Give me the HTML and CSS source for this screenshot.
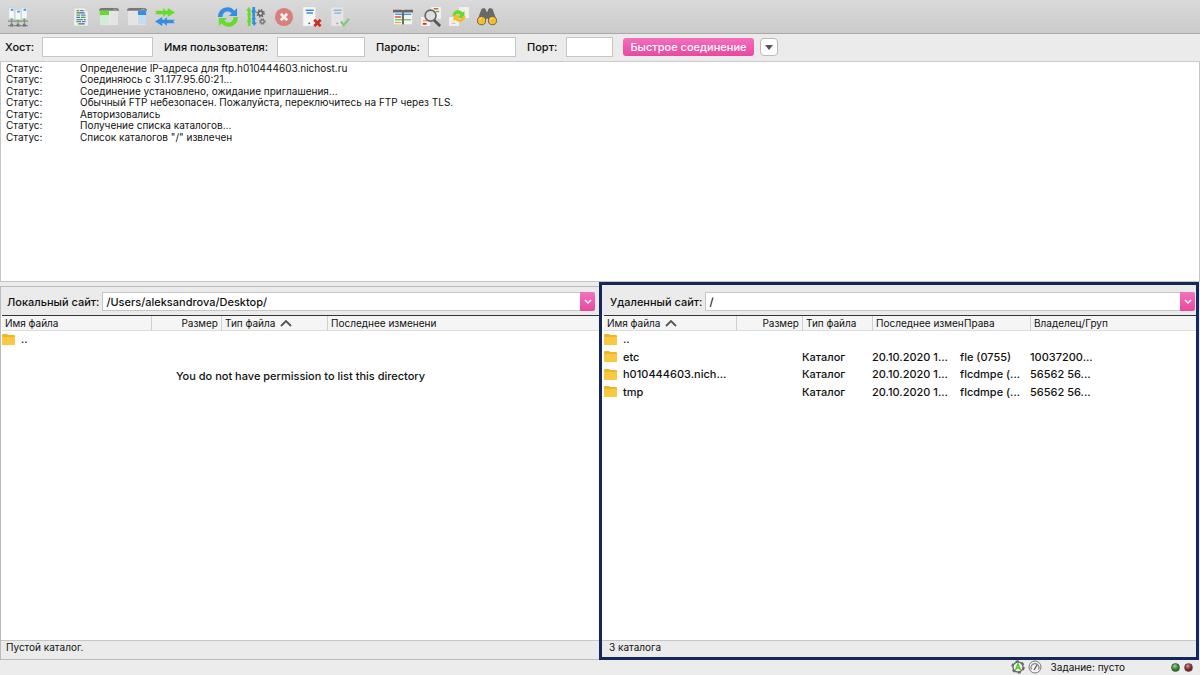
FILE: index.html
```html
<!DOCTYPE html>
<html lang="ru">
<head>
<meta charset="utf-8">
<title>FTP</title>
<link rel="stylesheet" href="styles.css">
</head>
<body>
<div class="app">
  <header class="toolbar">
    <div class="tools">
      <button class="tool" type="button" aria-label="Менеджер сайтов"><svg viewBox="0 0 22 22"><g fill="#f4f8fb" stroke="#c5cdd3" stroke-width=".5"><path d="M1 1h6v12H1zM15 1h6v12h-6zM8 3h6v11H8z"/></g><g fill="#3a9de8"><path d="M3 2h3v2H3zM10 4h3v2h-3zM17 2h3v2h-3z"/></g><path d="M0 15.500h22M0 20.500h22M4 13v6M11 14v6M18 13v6" stroke="#888" stroke-width="1.200" fill="none"/><g fill="#5ebd55"><circle cx="4" cy="14" r="1.300"/><circle cx="11" cy="15.500" r="1.500"/><circle cx="18" cy="14" r="1.300"/></g><g fill="#777"><path d="M2.500 18.500h3v3h-3zM9.500 18.500h3v3h-3zM16.500 18.500h3v3h-3z"/></g></svg></button>
    </div>
    <div class="tools">
      <button class="tool" type="button" aria-label="Журнал"><svg viewBox="0 0 22 22"><path d="M3 1h12l4 4v16H3z" fill="#eee" stroke="#c7c7c7" stroke-width=".6"/><path d="M15 1v4h4" fill="#ddd"/><g stroke-width="1.400" fill="none"><path d="M6 4h3M6 9h4M11 11.500h5M6 16h5" stroke="#49a942"/><path d="M10 4h4M11 9h5M6 14h7M12 16h4" stroke="#3d8ed9"/><path d="M6 6.500h9M6 11.500h4M14 14h2M8 18.500h7" stroke="#667"/></g></svg></button>
      <button class="tool" type="button" aria-label="Локальное дерево"><svg viewBox="0 0 22 22"><path d="M1 4q0-3 3-3h14q3 0 3 3v16H1z" fill="#eaeaea" stroke="#c9c9c9" stroke-width=".5"/><path d="M0 4q0-3 3-3h16q3 0 3 3z" fill="#777"/><path d="M1 4h10v5H1z" fill="#67da2d"/><path d="M1 10h10v9H1z" fill="#d0ecd2"/><path d="M12 5h9v14h-9z" fill="#e4e4e4"/><path d="M16 2.500h1M18 2.500h1" stroke="#ddd"/></svg></button>
      <button class="tool" type="button" aria-label="Удаленное дерево"><svg viewBox="0 0 22 22"><path d="M1 4q0-3 3-3h14q3 0 3 3v16H1z" fill="#eaeaea" stroke="#c9c9c9" stroke-width=".5"/><path d="M0 4q0-3 3-3h16q3 0 3 3z" fill="#777"/><path d="M12 4h9v5h-9z" fill="#348ee4"/><path d="M12 10h9v9h-9z" fill="#c6dcec"/><path d="M1 5h10v14H1z" fill="#e4e4e4"/><path d="M16 2.500h1M18 2.500h1" stroke="#ddd"/></svg></button>
      <button class="tool" type="button" aria-label="Очередь"><svg viewBox="0 0 22 22"><path d="M0 4h9V1l3 3 2 0V1l8 5-8 5V8h-2l-3 3V8H0l2-2z" fill="#65dc2c"/><path d="M22 14h-9v-3l-3 3H8v-3l-8 5 8 5v-3h2l3 3v-3h9l-2-2z" fill="#348ee4"/></svg></button>
    </div>
    <div class="tools">
      <button class="tool" type="button" aria-label="Обновить"><svg viewBox="0 0 22 22"><path d="M0 11C0 0 13-3 18 4l3-3v9h-9l3-3C11 3 5 5 5 11z" fill="#348ee4"/><path d="M22 11c0 11-13 14-18 7l-3 3v-9h9l-3 3c4 4 10 2 10-4z" fill="#65dc2c"/></svg></button>
      <button class="tool" type="button" aria-label="Обработка очереди"><svg viewBox="0 0 22 22"><path d="M3 0l3 4H5v3l1 2H5v5l1 1-1 2v4H2v-4l-1-2 1-1V9H1l1-2V4H0z" fill="#65dc2c"/><path d="M9 21l-3-4h1v-3l-1-2h1V7L6 5l1-2V0h3v3l1 2-1 2v5h1l-1 2v3h2z" fill="#348ee4"/><circle cx="16" cy="7" r="2.500" fill="none" stroke="#666" stroke-width="1.800"/><circle cx="16" cy="7" r="4" fill="none" stroke="#666" stroke-width="1.500" stroke-dasharray="1.570 1.570"/><circle cx="18" cy="16" r="2" fill="none" stroke="#777" stroke-width="1.500"/><circle cx="18" cy="16" r="3" fill="none" stroke="#777" stroke-width="1.200" stroke-dasharray="1.200 1.200"/></svg></button>
      <button class="tool" type="button" aria-label="Отмена"><svg viewBox="0 0 22 22"><circle cx="11" cy="11" r="10" fill="#d87f7c"/><path d="M7.500 7.500l7 7M14.500 7.500l-7 7" stroke="#eee" stroke-width="3"/></svg></button>
      <button class="tool" type="button" aria-label="Отключиться"><svg viewBox="0 0 22 22"><path d="M1 0h14v21H1z" fill="#f6f6f6" stroke="#d5d5d5" stroke-width=".5"/><path d="M4 3.500h9M5 6.500h7" stroke="#348ee4" stroke-width="1.700"/><circle cx="8" cy="18" r="1" fill="#555"/><path d="M13.500 14l7 7M20.500 14l-7 7" stroke="#d22921" stroke-width="3"/></svg></button>
      <button class="tool" type="button" aria-label="Переподключиться"><svg viewBox="0 0 22 22"><path d="M1 0h14v21H1z" fill="#e4e4e4" stroke="#cfcfcf" stroke-width=".5"/><path d="M4 3.500h9M5 6.500h7" stroke="#8bb5dc" stroke-width="1.700"/><circle cx="8" cy="18" r="1" fill="#999"/><path d="M12 16l3 4 6-7" fill="none" stroke="#86c77f" stroke-width="2.500"/></svg></button>
    </div>
    <div class="tools">
      <button class="tool" type="button" aria-label="Фильтр"><svg viewBox="0 0 22 22"><path d="M1 5h20v14H1z" fill="#f5f5f5"/><path d="M0 3h10l1 1 1-1h10v3H0z" fill="#666"/><path d="M11 4v15" stroke="#666" stroke-width="1.800"/><path d="M2 8h18" stroke="#348ee4" stroke-width="1.400"/><path d="M2 11h7" stroke="#e14b3c" stroke-width="1.600"/><path d="M2 14h18" stroke="#66ca3d" stroke-width="1.400"/><path d="M2 17h7" stroke="#e9b32d" stroke-width="1.400"/><path d="M11 7v12" stroke="#666" stroke-width="1.800"/></svg></button>
      <button class="tool" type="button" aria-label="Сравнение"><svg viewBox="0 0 22 22"><path d="M11 0h11v13H11zM0 11h10v10H0z" fill="#f1f1f1"/><path d="M14 2h5" stroke="#e04b3c" stroke-width="1.500"/><path d="M16 5h4" stroke="#67b944" stroke-width="1.500"/><path d="M2 15h6" stroke="#e5ac31" stroke-width="1.500"/><path d="M2 18.500h4" stroke="#e02525" stroke-width="2"/><path d="M14 14l7 7" stroke="#555" stroke-width="3"/><circle cx="10.500" cy="9.500" r="6" fill="#dedede" stroke="#656565" stroke-width="1.800"/></svg></button>
      <button class="tool" type="button" aria-label="Синхронный просмотр"><svg viewBox="0 0 22 22"><path d="M11 0h11v12H11zM0 11h11v10H0z" fill="#f0f0f0"/><path d="M4 10c0-7 8-8 11-4l2-2v8h-7l2-3c-2-3-5-1-5 1z" fill="#65d92c"/><path d="M18 10c0 7-8 8-11 4l-2 2V9h7l-2 3c2 3 5 1 5-2z" fill="#f5bc27"/><path d="M3 18h4" stroke="#bbb"/></svg></button>
      <button class="tool" type="button" aria-label="Поиск"><svg viewBox="0 0 22 22"><path d="M5 2l3-1 2 2v2h2V3l2-2 3 1 4 11-1 5h-7l-1-5h-2l-1 5H2l-1-5z" fill="#696969"/><circle cx="5" cy="15" r="4.500" fill="#f6bd27" stroke="#5e5e5e"/><circle cx="17" cy="15" r="4.500" fill="#f6bd27" stroke="#5e5e5e"/><path d="M3 14q0-2 2-2M15 14q0-2 2-2" stroke="#ffe795" fill="none"/></svg></button>
    </div>
  </header>

  <form class="quick">
    <label for="host">Хост:</label><input id="host" type="text">
    <label for="user">Имя пользователя:</label><input id="user" type="text">
    <label for="pass">Пароль:</label><input id="pass" type="password">
    <label for="port">Порт:</label><input id="port" type="text">
    <button class="connect" type="button">Быстрое соединение</button>
    <button class="history" type="button" aria-label="История"><svg viewBox="0 0 8 5"><path d="M0 0h8L4 5z" fill="#555"/></svg></button>
  </form>

  <section class="log">
    <dl class="log-list">
      <dt>Статус:</dt><dd>Определение IP-адреса для ftp.h010444603.nichost.ru</dd>
      <dt>Статус:</dt><dd>Соединяюсь с 31.177.95.60:21...</dd>
      <dt>Статус:</dt><dd>Соединение установлено, ожидание приглашения...</dd>
      <dt>Статус:</dt><dd>Обычный FTP небезопасен. Пожалуйста, переключитесь на FTP через TLS.</dd>
      <dt>Статус:</dt><dd>Авторизовались</dd>
      <dt>Статус:</dt><dd>Получение списка каталогов...</dd>
      <dt>Статус:</dt><dd>Список каталогов "/" извлечен</dd>
    </dl>
  </section>

  <main class="panes">
    <section class="pane local">
      <div class="path">
        <label for="local">Локальный сайт:</label>
        <div class="combo"><input id="local" type="text" value="/Users/aleksandrova/Desktop/"><button type="button" aria-label="Открыть список"><svg viewBox="0 0 8 5"><path d="M1 1l3 3 3-3" fill="none" stroke="#fff" stroke-width="1.400"/></svg></button></div>
      </div>
      <div class="list">
        <table class="files">
          <colgroup><col class="l-name"><col class="l-size"><col class="l-type"><col class="l-date"><col></colgroup>
          <thead><tr><th>Имя файла</th><th class="num">Размер</th><th>Тип файла <svg class="sort" viewBox="0 0 12 7"><path d="M1 6l5-5 5 5" fill="none" stroke="#555" stroke-width="1.800"/></svg></th><th>Последнее изменени</th><th class="rest"></th></tr></thead>
          <tbody><tr><td><span class="name"><svg class="folder" viewBox="0 0 13 12"><path d="M0 1q0-1 1-1h4l1 1h6q1 0 1 1v8q0 1-1 1H1q-1 0-1-1z" fill="#f0b42c"/><path d="M0 3h13v7q0 1-1 1H1q-1 0-1-1z" fill="#fbc940"/></svg>..</span></td><td></td><td></td><td></td><td></td></tr></tbody>
        </table>
        <p class="message">You do not have permission to list this directory</p>
      </div>
      <footer class="summary">Пустой каталог.</footer>
    </section>

    <section class="pane remote">
      <div class="path">
        <label for="remote">Удаленный сайт:</label>
        <div class="combo"><input id="remote" type="text" value="/"><button type="button" aria-label="Открыть список"><svg viewBox="0 0 8 5"><path d="M1 1l3 3 3-3" fill="none" stroke="#fff" stroke-width="1.400"/></svg></button></div>
      </div>
      <div class="list">
        <table class="files four">
          <colgroup><col class="r-name"><col class="r-size"><col class="r-type"><col class="r-date"><col class="r-mode"><col class="r-owner"><col></colgroup>
          <thead><tr><th>Имя файла <svg class="sort" viewBox="0 0 12 7"><path d="M1 6l5-5 5 5" fill="none" stroke="#555" stroke-width="1.800"/></svg></th><th class="num">Размер</th><th>Тип файла</th><th>Последнее измен</th><th class="rest">Права</th><th>Владелец/Груп</th><th class="rest"></th></tr></thead>
          <tbody>
            <tr><td><span class="name"><svg class="folder" viewBox="0 0 13 12"><path d="M0 1q0-1 1-1h4l1 1h6q1 0 1 1v8q0 1-1 1H1q-1 0-1-1z" fill="#f0b42c"/><path d="M0 3h13v7q0 1-1 1H1q-1 0-1-1z" fill="#fbc940"/></svg>..</span></td><td></td><td></td><td></td><td></td><td></td><td></td></tr>
            <tr><td><span class="name"><svg class="folder" viewBox="0 0 13 12"><path d="M0 1q0-1 1-1h4l1 1h6q1 0 1 1v8q0 1-1 1H1q-1 0-1-1z" fill="#f0b42c"/><path d="M0 3h13v7q0 1-1 1H1q-1 0-1-1z" fill="#fbc940"/></svg>etc</span></td><td></td><td>Каталог</td><td>20.10.2020 1...</td><td>fle (0755)</td><td>10037200...</td><td></td></tr>
            <tr><td><span class="name"><svg class="folder" viewBox="0 0 13 12"><path d="M0 1q0-1 1-1h4l1 1h6q1 0 1 1v8q0 1-1 1H1q-1 0-1-1z" fill="#f0b42c"/><path d="M0 3h13v7q0 1-1 1H1q-1 0-1-1z" fill="#fbc940"/></svg>h010444603.nich...</span></td><td></td><td>Каталог</td><td>20.10.2020 1...</td><td>flcdmpe (...</td><td>56562 56...</td><td></td></tr>
            <tr><td><span class="name"><svg class="folder" viewBox="0 0 13 12"><path d="M0 1q0-1 1-1h4l1 1h6q1 0 1 1v8q0 1-1 1H1q-1 0-1-1z" fill="#f0b42c"/><path d="M0 3h13v7q0 1-1 1H1q-1 0-1-1z" fill="#fbc940"/></svg>tmp</span></td><td></td><td>Каталог</td><td>20.10.2020 1...</td><td>flcdmpe (...</td><td>56562 56...</td><td></td></tr>
          </tbody>
        </table>
      </div>
      <footer class="summary">3 каталога</footer>
    </section>
  </main>

  <footer class="status">
    <svg class="badge" viewBox="0 0 14 14"><circle cx="7" cy="7" r="5" fill="#f4f4f4" stroke="#666" stroke-width="1.300"/><circle cx="7" cy="7" r="6" fill="none" stroke="#666" stroke-width="1.500" stroke-dasharray="3.140 3.140"/><path d="M4.500 10L7 4l2.500 6M5.500 8h3" fill="none" stroke="#45cf25" stroke-width="1.500"/></svg>
    <svg class="badge" viewBox="0 0 14 14"><circle cx="7" cy="7" r="6" fill="#f4f4f4" stroke="#777"/><path d="M3.500 9.500A4 4 0 1 1 10.500 9.500" fill="none" stroke="#888" stroke-width="1.200"/><path d="M6 10l3-5" stroke="#555" stroke-width="1.300"/></svg>
    <span class="queue">Задание: пусто</span>
    <span class="led green"></span><span class="led red"></span>
  </footer>
</div>
</body>
</html>
```
FILE: styles.css
```css
* { box-sizing: border-box; }
body { margin: 0; font: 500 11px/16px Inter, "Noto Sans", sans-serif; color: #111; background: #ececec; }
button, input { font: inherit; color: inherit; margin: 0; padding: 0; border: 0; border-radius: 0; }
svg { display: block; }

.app { height: 100vh; display: grid; grid-template-rows: 34px 28px minmax(90px, 220fr) minmax(120px, 378fr) 15px; }

.toolbar { display: flex; align-items: center; gap: 35px; padding: 0 4px; background: linear-gradient(#dadada, #cacaca); border-bottom: 1px solid #aaa; }
.tools { display: flex; }
.tool { width: 28px; height: 28px; padding: 4px; background: none; }
.tool svg { width: 20px; height: 20px; }

.quick { display: grid; grid-template-columns: 37px 111px 124px 88px 63px 88px 50px 47px 141px 23px; align-items: center; padding: 0 5px 1px; background: #ebebeb; border-bottom: 1px solid #ccc; }
.quick label + input { height: 20px; padding: 0 4px; background: #fff; border: 1px solid #c6c6c6; }
.quick input + label { padding-left: 11px; white-space: nowrap; }
.connect { height: 18px; margin-left: 10px; color: #fff; line-height: 18px; border-radius: 3px; background: linear-gradient(#f36fbd, #ea479e); white-space: nowrap; }
.history { width: 18px; height: 18px; margin-left: 6px; background: #fff; border: 1px solid #bbb; border-radius: 4px; display: grid; place-items: center; }
.history svg { width: 8px; height: 5px; }

.log { background: #fff; border: 1px solid #c4c4c4; border-top: 0; overflow: hidden; font-size: 10px; font-weight: 400; }
.log-list { margin: 0; padding: 1px 5px; display: grid; grid-template-columns: 74px 1fr; grid-auto-rows: 1fr; min-height: 82px; line-height: 11px; }
.log-list dd { margin: 0; }

.panes { display: grid; grid-template-columns: 599fr 601fr; min-height: 0; }
.pane { display: grid; grid-template-rows: 28px 1fr 19px; min-width: 0; min-height: 0; background: #fff; }
.local { margin-top: 4px; border: 1px solid #bbb; border-right: 0; }
.remote { border: 3px solid #15285c; margin-right: 1px; }
.remote { grid-template-rows: 30px 1fr 17px; }
.path { display: flex; align-items: center; gap: 3px; padding: 1px 4px 0 6px; background: #ebebeb; }
.remote .path { padding: 3px 1px 0 8px; }
.path label { white-space: nowrap; }
.combo { flex: 1; display: flex; height: 19px; border: 1px solid #c6c6c6; background: #fff; }
.combo input { flex: 1; min-width: 0; padding: 1px 3px 0; background: none; }
.combo button { width: 15px; margin: -1px; display: grid; place-items: center; background: linear-gradient(#f073bb, #ea479e); border-radius: 0 3px 3px 0; }
.combo svg { width: 8px; height: 5px; }

.list { border-top: 1px solid #333; overflow: hidden; min-height: 0; margin-left: 1px; }
.remote .list { margin-left: 2px; }
.files { width: 100%; table-layout: fixed; border-collapse: separate; border-spacing: 0; height: 32px; }
.files.four { height: 85px; }
.files th { height: 15px; padding: 0 0 0 3px; font-size: 10px; font-weight: 400; line-height: 13px; text-align: left; background: #f5f5f5; border-bottom: 1px solid #ddd; white-space: nowrap; }
.files th + th { border-left: 1px solid #d0d0d0; }
.files th + th.rest { border-left: 0; padding-left: 4px; }
.files .num { text-align: right; padding-right: 3px; }
.sort { display: inline-block; width: 12px; height: 7px; margin-left: 2px; }
.files td { padding: 0; line-height: 17px; white-space: nowrap; overflow: hidden; }
.name { display: flex; align-items: center; gap: 6px; }
.folder { width: 13px; height: 12px; flex: none; }
.l-name { width: 149px; }
.l-size { width: 70px; }
.l-type { width: 106px; }
.l-date { width: 110px; }
.r-name { width: 132px; }
.r-size { width: 66px; }
.r-type { width: 70px; }
.r-date { width: 88px; }
.r-mode { width: 70px; }
.r-owner { width: 76px; }
.message { margin: 20px 0 0; text-align: center; }
.summary { padding: 0 5px; font-size: 10px; line-height: 13px; background: #ebebeb; border-top: 1px solid #c6c6c6; font-weight: 400; }
.remote .summary { padding-left: 7px; }

.status { display: flex; align-items: center; justify-content: flex-end; gap: 3px; padding: 0 7px 1px 0; font-size: 10px; }
.badge { width: 14px; height: 14px; }
.queue { margin: 0 42px 0 6px; line-height: 14px; font-weight: 400; }
.led { width: 9px; height: 9px; margin-left: 1px; border-radius: 50%; border: 1px solid #555; }
.green { background: radial-gradient(circle at 40% 30%, #9d9, #2a8a25 50%, #155512); }
.red { background: radial-gradient(circle at 40% 30%, #d99, #8d2020 50%, #551010); }
```
